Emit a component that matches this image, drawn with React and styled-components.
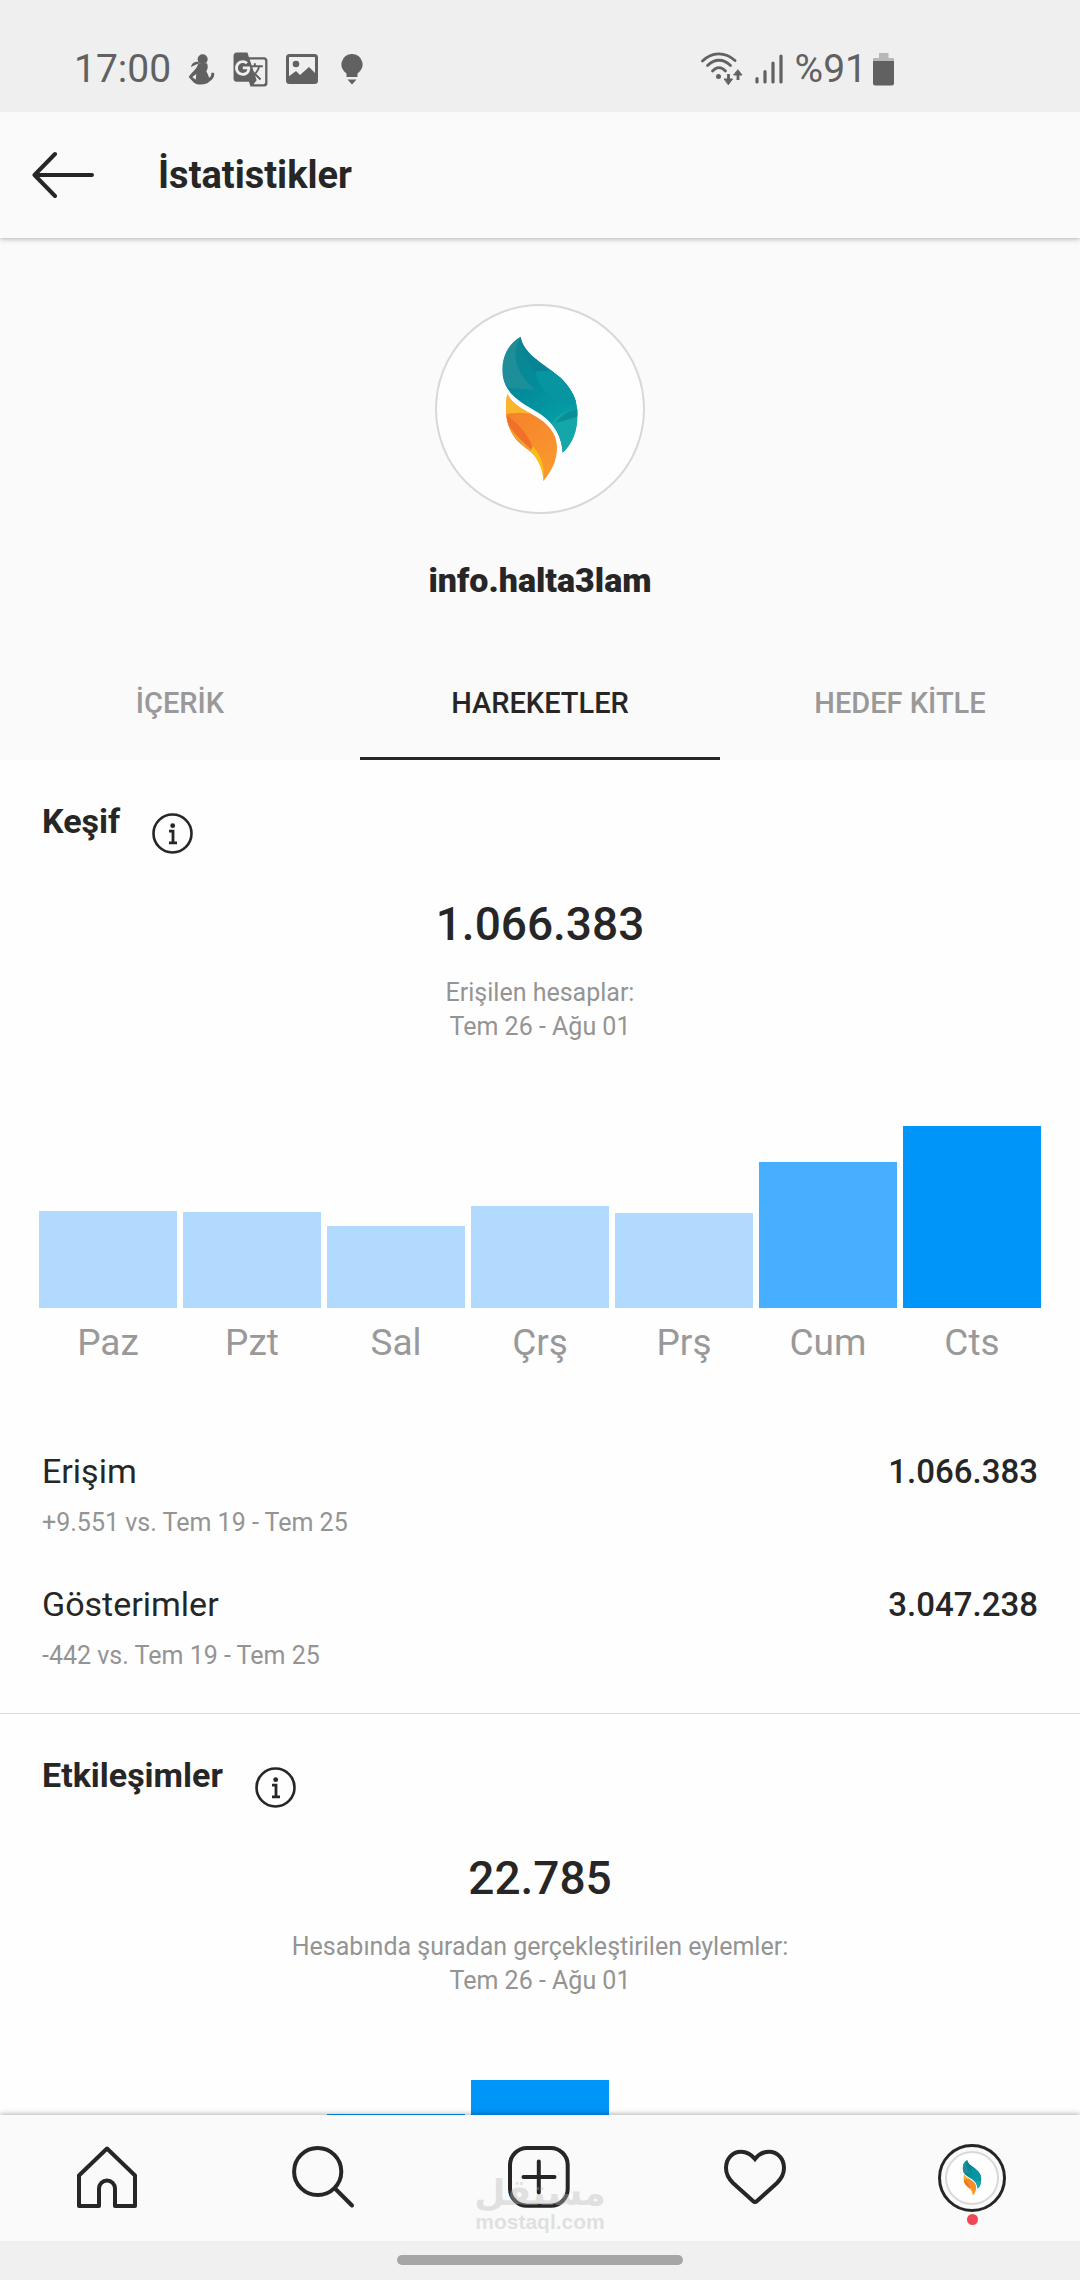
import React, { useState } from 'react';
import styled, { createGlobalStyle } from 'styled-components';
import { MdGTranslate } from 'react-icons/md';

const GlobalStyle = createGlobalStyle`
  * {
    box-sizing: border-box;
  }

  body {
    margin: 0;
    background: #fefefe;
    color: #262626;
    font-family: Roboto, 'Liberation Sans', sans-serif;
  }

  h1, h2, p, dl, dt, dd {
    margin: 0;
  }

  button {
    padding: 0;
    border: none;
    background: none;
    color: inherit;
    font-family: inherit;
    cursor: pointer;
  }

  svg {
    display: block;
    flex: none;
  }
`;

const Screen = styled.div`
  display: flex;
  flex-direction: column;
  height: 100vh;
`;

const StatusBar = styled.div`
  position: relative;
  z-index: 2;
  display: flex;
  flex: none;
  justify-content: space-between;
  height: 112px;
  padding: 26px 186px 0 74px;
  background: #efefef;
  color: #616161;
  font-size: 39px;
  line-height: 86px;
`;

const StatusGroup = styled.div`
  display: flex;
  align-items: center;
  gap: ${({ $gap }) => $gap}px;
`;

const Header = styled.header`
  position: relative;
  z-index: 1;
  display: flex;
  flex: none;
  align-items: center;
  gap: 64px;
  height: 126px;
  padding: 0 32px;
  background: #fafafa;
  box-shadow: 0 1px 5px rgba(0, 0, 0, 0.3);
`;

const HeaderTitle = styled.h1`
  font-size: 38px;
  font-weight: 700;
`;

const Content = styled.main`
  flex: 1;
  min-height: 0;
  overflow: hidden;
`;

const Profile = styled.section`
  display: flex;
  flex-direction: column;
  align-items: center;
  gap: 46px;
  padding: 66px 0 46px;
  background: #fafafa;
`;

const Avatar = styled.div`
  display: flex;
  align-items: center;
  justify-content: center;
  width: ${({ $size }) => $size}px;
  height: ${({ $size }) => $size}px;
  overflow: hidden;
  border: 2px solid #d8d8d8;
  border-radius: 50%;
  background: #fefefe;
`;

const Username = styled.p`
  font-size: 34px;
  font-weight: 900;
  line-height: 40px;
`;

const Tabs = styled.div`
  display: grid;
  grid-template-columns: repeat(3, 1fr);
  background: #fafafa;
`;

const Tab = styled.button`
  padding: 37px 0 34px;
  border-bottom: 3px solid ${({ $active }) => ($active ? '#262626' : 'transparent')};
  color: ${({ $active }) => ($active ? '#262626' : '#999999')};
  font-size: 29px;
  font-weight: 500;
  line-height: 40px;
`;

const Section = styled.section`
  padding: 41px 42px 40px;
  border-bottom: 1px solid #dbdbdb;
`;

const SectionHeader = styled.div`
  display: flex;
  align-items: flex-start;
  gap: 32px;
`;

const SectionTitle = styled.h2`
  font-size: 34px;
  font-weight: 700;
  line-height: 40px;
`;

const InfoButton = styled.button`
  margin-top: 12px;
`;

const Total = styled.p`
  margin-top: 42px;
  font-size: 46px;
  font-weight: 500;
  line-height: 56px;
  text-align: center;
`;

const Caption = styled.p`
  margin-top: 24px;
  color: #949494;
  font-size: 25px;
  line-height: 34px;
  text-align: center;
`;

const Chart = styled.div`
  display: grid;
  grid-template-columns: repeat(7, 1fr);
  column-gap: 6px;
  align-items: end;
  margin: 82px -3px 0;
`;

const Bar = styled.div`
  background: ${({ $color }) => $color};
`;

const Day = styled.span`
  margin-top: 13px;
  color: #999999;
  font-size: 37px;
  line-height: 44px;
  text-align: center;
`;

const Metrics = styled.dl`
  display: flex;
  flex-direction: column;
  gap: 44px;
  margin-top: 86px;
`;

const Metric = styled.div`
  display: grid;
  grid-template-columns: 1fr auto;
  align-items: baseline;
  row-gap: 14px;
  font-size: 34px;
  line-height: 40px;
`;

const MetricValue = styled.dd`
  font-size: 33px;
  font-weight: 500;
`;

const MetricChange = styled.dd`
  grid-column: 1 / -1;
  color: #949494;
  font-size: 25px;
  line-height: 34px;
`;

const BottomNav = styled.nav`
  position: relative;
  z-index: 1;
  display: grid;
  flex: none;
  grid-template-columns: repeat(5, 1fr);
  height: 126px;
  background: #fafafa;
  box-shadow: 0 -1px 5px rgba(0, 0, 0, 0.3);
`;

const NavButton = styled.button`
  display: flex;
  align-items: center;
  justify-content: center;
`;

const ActiveRing = styled.div`
  position: relative;
  display: flex;
  align-items: center;
  justify-content: center;
  width: 68px;
  height: 68px;
  border: 3px solid #262626;
  border-radius: 50%;

  &::after {
    content: '';
    position: absolute;
    top: 67px;
    width: 11px;
    height: 11px;
    border-radius: 50%;
    background: #ed4956;
  }
`;

const Watermark = styled.div`
  position: absolute;
  inset: 0;
  display: flex;
  flex-direction: column;
  align-items: center;
  justify-content: flex-end;
  padding-bottom: 9px;
  color: #bbbbbb;
  font-weight: 700;
  opacity: 0.4;
  pointer-events: none;
`;

const WatermarkArabic = styled.span`
  font-family: 'DejaVu Sans', sans-serif;
  font-size: 36px;
  line-height: 38px;
`;

const WatermarkLatin = styled.span`
  font-family: 'Liberation Sans', sans-serif;
  font-size: 21px;
  line-height: 20px;
`;

const GestureBar = styled.div`
  position: relative;
  z-index: 2;
  display: flex;
  flex: none;
  justify-content: center;
  height: 39px;
  padding-top: 14px;
  background: #f0f0f0;

  &::after {
    content: '';
    width: 286px;
    height: 10px;
    border-radius: 5px;
    background: #a6a6a6;
  }
`;

const LIGHT = '#b2daff';
const MEDIUM = '#47afff';
const STRONG = '#0095f8';

const reachByDay = [
  { day: 'Paz', height: 97, color: LIGHT },
  { day: 'Pzt', height: 96, color: LIGHT },
  { day: 'Sal', height: 82, color: LIGHT },
  { day: 'Çrş', height: 102, color: LIGHT },
  { day: 'Prş', height: 95, color: LIGHT },
  { day: 'Cum', height: 146, color: MEDIUM },
  { day: 'Cts', height: 182, color: STRONG },
];

const actionsByDay = [
  { height: 110, color: LIGHT },
  { height: 124, color: LIGHT },
  { height: 148, color: STRONG },
  { height: 182, color: STRONG },
  { height: 130, color: MEDIUM },
  { height: 118, color: LIGHT },
  { height: 104, color: LIGHT },
];

const metrics = [
  { name: 'Erişim', value: '1.066.383', change: '+9.551 vs. Tem 19 - Tem 25' },
  { name: 'Gösterimler', value: '3.047.238', change: '-442 vs. Tem 19 - Tem 25' },
];

const tabs = ['İÇERİK', 'HAREKETLER', 'HEDEF KİTLE'];

const FlameLogo = ({ size, id }) => (
  <svg width={size} height={size} viewBox="45 42 630 630">
    <defs>
      <linearGradient id={`${id}-teal`} x1="0" y1="0" x2="0.6" y2="1">
        <stop offset="0" stopColor="#14808c" />
        <stop offset="0.5" stopColor="#028c9b" />
        <stop offset="1" stopColor="#06a5aa" />
      </linearGradient>
      <linearGradient id={`${id}-orange`} x1="0" y1="0" x2="0.6" y2="1">
        <stop offset="0" stopColor="#f47a2b" />
        <stop offset="1" stopColor="#f99a2d" />
      </linearGradient>
      <clipPath id={`${id}-top`}>
        <path d="M302 140C255 165 240 225 250 265C262 325 330 350 365 375C405 405 425 440 428 488C460 460 475 415 472 360C470 320 445 285 420 262C380 225 310 195 302 140Z" />
      </clipPath>
      <clipPath id={`${id}-bottom`}>
        <path d="M262 312C252 365 258 410 290 450C315 475 340 485 355 515C365 535 370 550 370 573C395 545 412 510 411 470C410 430 385 400 340 375C305 355 280 345 262 312Z" />
      </clipPath>
    </defs>
    <g clipPath={`url(#${id}-top)`}>
      <path d="M230 130H490V500H230Z" fill={`url(#${id}-teal)`} />
      <path d="M302 140C275 190 280 240 345 300L230 290V130Z" fill="#26929b" opacity="0.7" />
      <path d="M310 190C340 230 350 290 435 345L480 330V240L300 130Z" fill="#087f93" opacity="0.65" />
      <path d="M345 245C355 290 390 325 438 350L480 330L400 240Z" fill="#0795a2" />
      <path d="M480 355C430 360 410 380 395 400L430 500H480Z" fill="#14a6a9" />
      <path d="M480 355C440 362 425 375 405 400L472 380Z" fill="#0b8f96" />
    </g>
    <g clipPath={`url(#${id}-bottom)`}>
      <path d="M240 300H430V590H240Z" fill={`url(#${id}-orange)`} />
      <path d="M250 300L345 372L300 368L255 372Z" fill="#fbb52c" />
      <path d="M255 374C290 395 325 430 345 490L290 460L250 420Z" fill="#f0702a" />
      <path d="M256 385C275 430 310 455 345 490L280 465Z" fill="#f3a02f" />
      <path d="M338 468C365 500 375 530 370 573L330 490Z" fill="#fdbd18" />
    </g>
  </svg>
);

const InfoIcon = () => (
  <svg width="41" height="41" viewBox="0 0 41 41" fill="none" stroke="#262626">
    <circle cx="20.5" cy="20.5" r="19" strokeWidth="2.6" />
    <circle cx="20.7" cy="12.7" r="2.4" fill="#262626" stroke="none" />
    <path d="M17 18.2h4v11.4M17 29.8h8" strokeWidth="2.8" />
  </svg>
);

const BackIcon = () => (
  <svg width="62" height="48" viewBox="0 0 62 48" fill="none" stroke="#262626" strokeWidth="4" strokeLinecap="round" strokeLinejoin="round">
    <path d="M23 3L2.5 24L23 45M2.5 24H60" />
  </svg>
);

const NavIcon = ({ children }) => (
  <svg width="84" height="84" viewBox="0 0 84 84" fill="none" stroke="#262626" strokeWidth="4">
    {children}
  </svg>
);

const StatusIcons = () => (
  <>
    <svg width="27" height="31" viewBox="29 38 81 93" fill="#616161">
      <circle cx="73" cy="54" r="15" />
      <path d="M38 77C40 66 50 60 62 62L60 68C52 68 48 74 38 77Z" />
      <path d="M60 66H86C90 76 88 84 84 90C88 98 91 104 92 109C98 106 99 101 99 94H107C110 104 104 114 94 120C86 131 58 133 47 124L31 107C40 92 56 84 60 66ZM54 98L42 107L52 115Z" fillRule="evenodd" />
    </svg>
    <MdGTranslate size={37} />
    <svg width="32" height="30" viewBox="0 0 32 30" fill="none" stroke="#616161" strokeWidth="3">
      <rect x="1.5" y="1.5" width="29" height="27" rx="2" />
      <circle cx="10" cy="10" r="3.3" fill="#616161" stroke="none" />
      <path d="M2 23l8-6 4 4 9-8 8 8v7H2z" fill="#616161" stroke="none" />
    </svg>
    <svg width="34" height="31" viewBox="0 0 34 31" fill="#616161">
      <path d="M17 0a10.5 10.5 0 0 1 5.5 19.5V23h-11v-3.5A10.5 10.5 0 0 1 17 0z" />
      <path d="M12.5 25.5h9L17 30.5z" />
    </svg>
  </>
);

const ConnectionIcons = () => (
  <>
    <svg width="42" height="34" viewBox="0 0 42 34" fill="none" stroke="#616161" strokeWidth="2.8" strokeLinecap="round">
      <path d="M1.5 9C11-.5 24-.5 34 8.5" />
      <path d="M6.5 13.5c7-7 16-7 23 0" />
      <path d="M11.5 19c4-4.5 9-4.5 13 0" />
      <circle cx="17.5" cy="24.5" r="2.5" fill="#616161" stroke="none" />
      <path d="M27.5 22v8M37 28v-8" strokeLinecap="butt" />
      <path d="M23.5 27h8l-4 5.5zM33 23h8l-4-5z" fill="#616161" strokeWidth="1" />
    </svg>
    <svg width="28" height="30" viewBox="0 0 28 30" stroke="#616161" strokeWidth="3.2" strokeLinecap="round">
      <path d="M2 24.5v3.5M10 17.5V28M18 9V28M26 2V28" />
    </svg>
  </>
);

const BatteryIcon = () => (
  <svg width="21" height="34" viewBox="0 0 21 34">
    <path d="M6 1h9.5v5H20a1 1 0 0 1 1 1v2H0V7a1 1 0 0 1 1-1h5z" fill="#b8b8b8" />
    <path d="M0 9h21v22.5a2 2 0 0 1-2 2H2a2 2 0 0 1-2-2z" fill="#616161" />
  </svg>
);

const BarChart = ({ bars }) => (
  <Chart>
    {bars.map((bar, index) => (
      <Bar key={index} $color={bar.color} style={{ height: bar.height }} />
    ))}
    {bars.map((bar) => bar.day && <Day key={bar.day}>{bar.day}</Day>)}
  </Chart>
);

const InsightSection = ({ title, total, caption, bars, children }) => (
  <Section>
    <SectionHeader>
      <SectionTitle>{title}</SectionTitle>
      <InfoButton aria-label={title}>
        <InfoIcon />
      </InfoButton>
    </SectionHeader>
    <Total>{total}</Total>
    <Caption>
      {caption}
      <br />
      Tem 26 - Ağu 01
    </Caption>
    <BarChart bars={bars} />
    {children}
  </Section>
);

const App = () => {
  const [activeTab, setActiveTab] = useState('HAREKETLER');

  return (
    <Screen>
      <GlobalStyle />
      <StatusBar>
        <StatusGroup $gap={17}>
          <span>17:00</span>
          <StatusIcons />
        </StatusGroup>
        <StatusGroup $gap={12}>
          <ConnectionIcons />
          <StatusGroup $gap={6}>
            <span>%91</span>
            <BatteryIcon />
          </StatusGroup>
        </StatusGroup>
      </StatusBar>

      <Header>
        <button aria-label="Geri">
          <BackIcon />
        </button>
        <HeaderTitle>İstatistikler</HeaderTitle>
      </Header>

      <Content>
        <Profile>
          <Avatar $size={210}>
            <FlameLogo size={210} id="profile" />
          </Avatar>
          <Username>info.halta3lam</Username>
        </Profile>

        <Tabs role="tablist">
          {tabs.map((tab) => (
            <Tab
              key={tab}
              role="tab"
              aria-selected={tab === activeTab}
              $active={tab === activeTab}
              onClick={() => setActiveTab(tab)}
            >
              {tab}
            </Tab>
          ))}
        </Tabs>

        <InsightSection title="Keşif" total="1.066.383" caption="Erişilen hesaplar:" bars={reachByDay}>
          <Metrics>
            {metrics.map((metric) => (
              <Metric key={metric.name}>
                <dt>{metric.name}</dt>
                <MetricValue>{metric.value}</MetricValue>
                <MetricChange>{metric.change}</MetricChange>
              </Metric>
            ))}
          </Metrics>
        </InsightSection>

        <InsightSection
          title="Etkileşimler"
          total="22.785"
          caption="Hesabında şuradan gerçekleştirilen eylemler:"
          bars={actionsByDay}
        />
      </Content>

      <BottomNav>
        <NavButton aria-label="Ana sayfa">
          <NavIcon>
            <path d="M41 12.5L69 39.5V70H49V52.5a8 8 0 0 0-16 0V70H13V39.5Z" strokeLinejoin="round" />
          </NavIcon>
        </NavButton>
        <NavButton aria-label="Ara">
          <NavIcon>
            <circle cx="35.7" cy="35.5" r="23.6" />
            <path d="M53 52.5L70 69.5" strokeLinecap="round" />
          </NavIcon>
        </NavButton>
        <NavButton aria-label="Ekle">
          <NavIcon>
            <rect x="12" y="12" width="57.7" height="57.7" rx="17" />
            <path d="M25.5 41H56.5M40.8 25.5V56.5" strokeLinecap="round" />
          </NavIcon>
        </NavButton>
        <NavButton aria-label="Beğeniler">
          <NavIcon>
            <path d="M41 23C37 18 32 15.7 27 15.7C18.5 15.7 12 22.5 12 32C12 38 15 43 19 47L39 65Q41 67 43 65L63 47C67 43 70 38 70 32C70 22.5 63.5 15.7 55 15.7C50 15.7 45 18 41 23Z" />
          </NavIcon>
        </NavButton>
        <NavButton aria-label="Profil">
          <ActiveRing>
            <Avatar $size={54}>
              <FlameLogo size={52} id="nav" />
            </Avatar>
          </ActiveRing>
        </NavButton>
        <Watermark>
          <WatermarkArabic lang="ar">مستقل</WatermarkArabic>
          <WatermarkLatin>mostaql.com</WatermarkLatin>
        </Watermark>
      </BottomNav>
      <GestureBar />
    </Screen>
  );
};

export default App;
